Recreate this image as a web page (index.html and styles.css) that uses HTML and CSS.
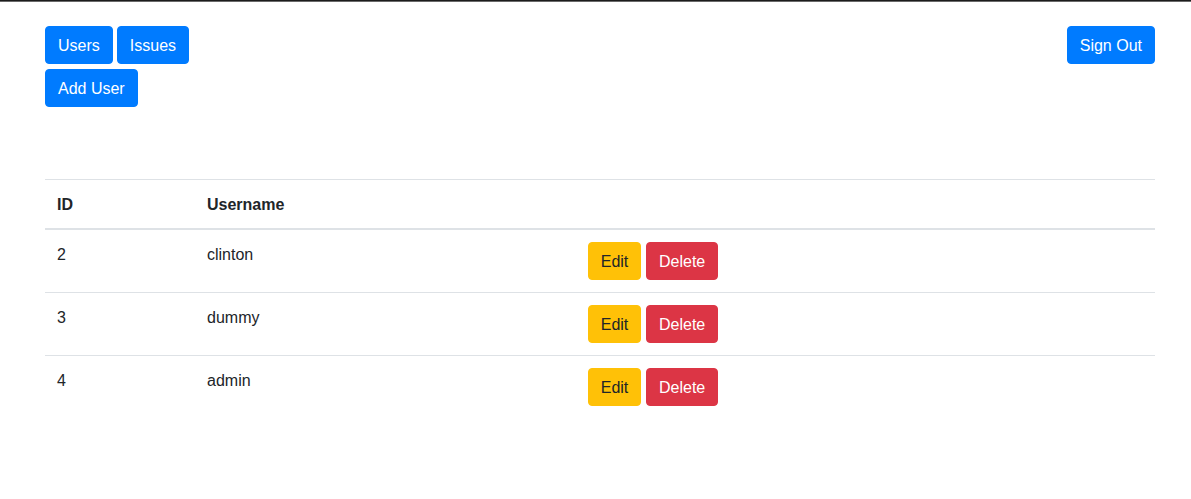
FILE: index.html
```html
<!DOCTYPE html>
<html lang="en">
<head>
<meta charset="utf-8">
<title>Users</title>
<link rel="stylesheet" href="styles.css">
</head>
<body>
<div class="topline"></div>
<div class="container">
  <header class="toolbar">
    <div class="nav-left">
      <div class="nav-row">
        <button class="btn btn-primary">Users</button>
        <button class="btn btn-primary">Issues</button>
      </div>
      <div class="nav-row second">
        <button class="btn btn-primary">Add User</button>
      </div>
    </div>
    <button class="btn btn-primary">Sign Out</button>
  </header>
  <table class="table">
    <colgroup>
      <col class="c-id"><col class="c-name"><col>
    </colgroup>
    <thead>
      <tr><th>ID</th><th>Username</th><th></th></tr>
    </thead>
    <tbody>
      <tr>
        <td>2</td><td>clinton</td>
        <td><div class="actions"><button class="btn btn-warning">Edit</button><button class="btn btn-danger">Delete</button></div></td>
      </tr>
      <tr>
        <td>3</td><td>dummy</td>
        <td><div class="actions"><button class="btn btn-warning">Edit</button><button class="btn btn-danger">Delete</button></div></td>
      </tr>
      <tr>
        <td>4</td><td>admin</td>
        <td><div class="actions"><button class="btn btn-warning">Edit</button><button class="btn btn-danger">Delete</button></div></td>
      </tr>
    </tbody>
  </table>
</div>
</body>
</html>
```
FILE: styles.css
```css
* { box-sizing: border-box; }
html, body { margin: 0; padding: 0; background: #fff; }
body {
  font-family: "Liberation Sans", Arial, sans-serif;
  font-size: 16px;
  line-height: 1.5;
  color: #212529;
}
.topline {
  height: 2px;
  background: #1c1c1c;
  border-bottom: 1px solid #6a6a6a;
}
.container {
  width: 1110px;
  margin-left: 45px;
  padding-top: 24px;
}
.toolbar {
  display: flex;
  justify-content: space-between;
  align-items: flex-start;
}
.nav-row { display: flex; gap: 4px; }
.nav-row.second { margin-top: 5px; }
.btn {
  display: inline-block;
  font-family: inherit;
  font-size: 16px;
  line-height: 24px;
  padding: 7px 12px 5px;
  border: 1px solid transparent;
  border-radius: 4px;
  cursor: pointer;
  font-weight: 400;
}
.btn-primary { background: #007bff; border-color: #007bff; color: #fff; }
.btn-warning { background: #ffc107; border-color: #ffc107; color: #212529; width: 53px; padding-left: 0; padding-right: 0; text-align: center; }
.btn-danger { background: #dc3545; border-color: #dc3545; color: #fff; }
.table {
  width: 100%;
  margin-top: 72px;
  border-collapse: collapse;
  table-layout: fixed;
}
.c-id { width: 150px; }
.c-name { width: 381px; }
.table th, .table td {
  padding: 13px 12px 11px;
  text-align: left;
  vertical-align: top;
  border-top: 1px solid #dee2e6;
}
.table td:last-child { padding-top: 12px; padding-bottom: 12px; }
.table th { font-weight: 700; }
.table thead th { border-bottom: 2px solid #dee2e6; vertical-align: bottom; }
.actions { display: flex; gap: 5px; }
```
